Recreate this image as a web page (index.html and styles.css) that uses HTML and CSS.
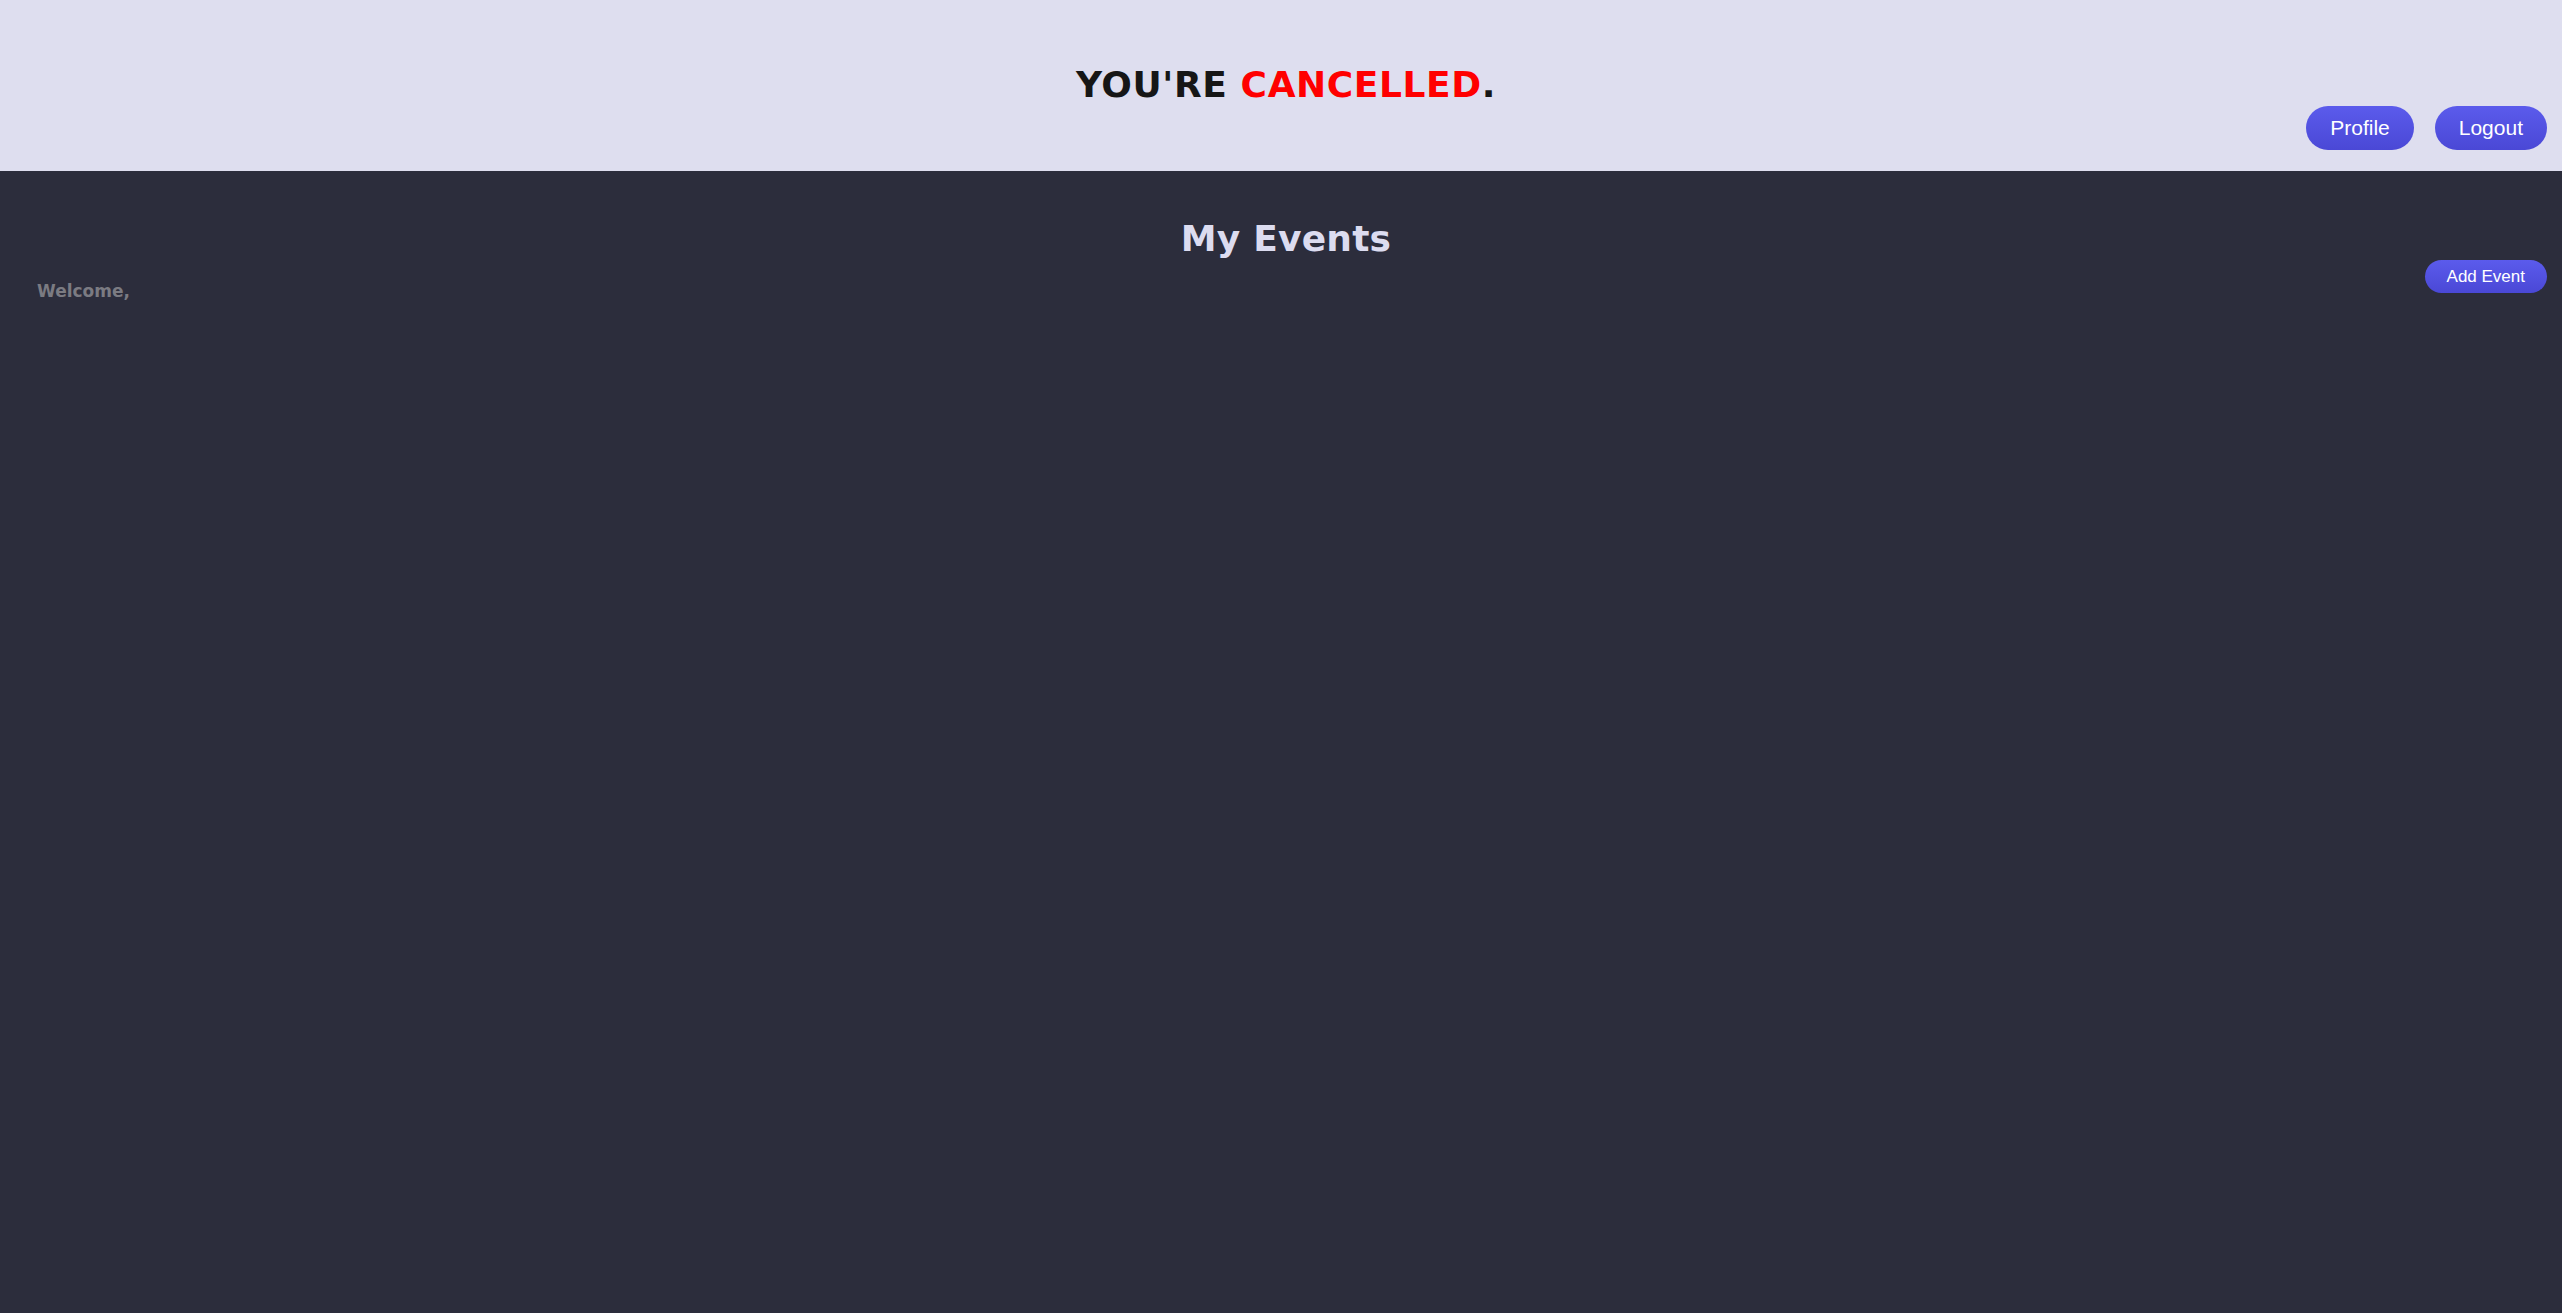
FILE: index.html
```html
<!DOCTYPE html>
<html lang="en">
<head>
<meta charset="utf-8">
<title>You're Cancelled</title>
<link rel="stylesheet" href="styles.css">
</head>
<body>
<header class="site-header">
  <h1 class="brand">YOU'RE <span class="brand-accent">CANCELLED</span>.</h1>
  <nav class="nav">
    <button class="pill pill-lg">Profile</button>
    <button class="pill pill-lg">Logout</button>
  </nav>
</header>
<main class="content">
  <h2 class="page-title">My Events</h2>
  <div class="toolbar">
    <p class="welcome">Welcome,</p>
    <button class="pill pill-sm">Add Event</button>
  </div>
</main>
</body>
</html>
```

FILE: styles.css
```css
html, body {
  margin: 0;
  padding: 0;
  height: 100%;
}
body {
  background: #2c2d3c;
  font-family: "DejaVu Sans", Verdana, sans-serif;
}
.site-header {
  background: #dedeef;
  padding: 64px 15px 21px 15px;
  display: flex;
  flex-direction: column;
}
.brand {
  margin: 0 0 0 10px;
  text-align: center;
  font-size: 36px;
  line-height: 42px;
  font-weight: bold;
  letter-spacing: 0.6px;
  color: #161616;
}
.brand-accent {
  color: #ff0000;
}
.nav {
  display: flex;
  justify-content: flex-end;
  gap: 21px;
}
.pill {
  font-family: "Liberation Sans", Arial, sans-serif;
  color: #ffffff;
  border: none;
  border-radius: 999px;
  background: linear-gradient(#5b5bec, #4a48d6);
  cursor: pointer;
  padding: 0;
}
.pill-lg {
  height: 44px;
  font-size: 21px;
  padding: 0 24px;
}
.pill-sm {
  height: 33px;
  font-size: 17px;
  padding: 0 22px;
}
.content {
  padding: 47px 15px 0 25px;
}
.page-title {
  margin: 0;
  text-align: center;
  font-size: 36px;
  line-height: 42px;
  font-weight: bold;
  letter-spacing: 0.2px;
  color: #dcdcf0;
}
.toolbar {
  display: flex;
  justify-content: space-between;
  align-items: flex-start;
}
.welcome {
  margin: 21px 0 0 12px;
  font-size: 17px;
  font-weight: bold;
  color: #7b7b82;
}
```
